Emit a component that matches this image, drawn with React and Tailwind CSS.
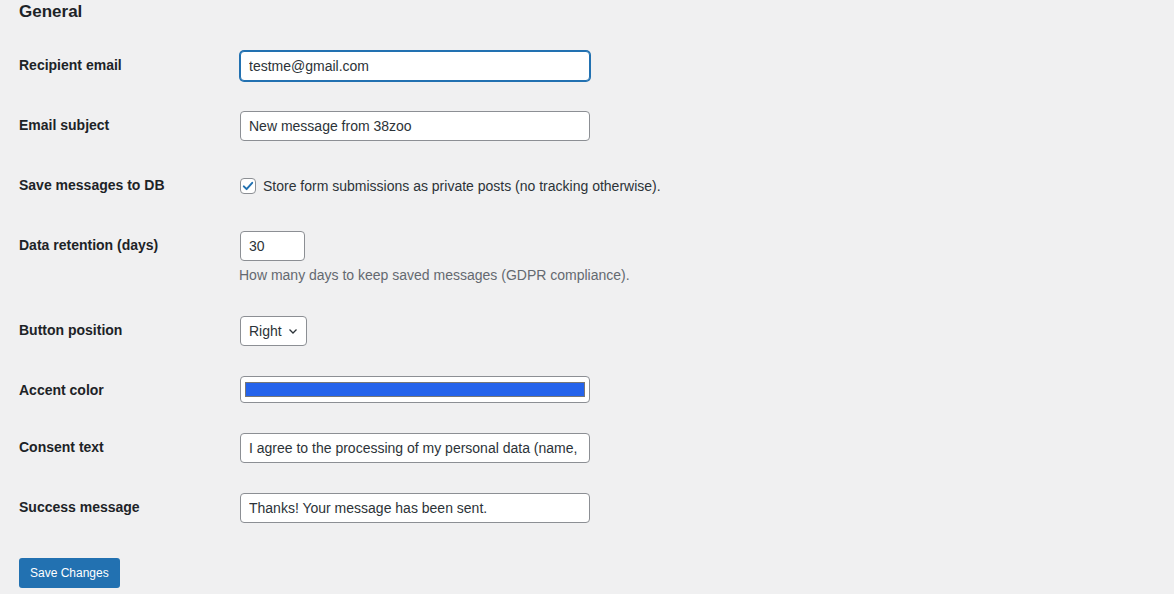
import React from 'react';

const font = { fontFamily: '"Liberation Sans", Arial, sans-serif' };

const Row = ({ label, children }) => (
  <div className="flex">
    <div className="w-[221px] shrink-0 pt-[20px] text-[14px] font-semibold leading-[18px] text-[#1d2327]">
      {label}
    </div>
    <div className="py-[15px]">{children}</div>
  </div>
);

const inputCls =
  'block h-[30px] rounded-[4px] border border-[#8c8f94] bg-white px-[8px] text-[14px] text-[#2c3338] outline-none';

export default function App() {
  return (
    <div className="min-h-[594px] w-full bg-[#f0f0f1] pl-[19px] pt-[2px]" style={font}>
      <h2 className="mb-[14px] text-[17px] font-semibold leading-[20px] text-[#1d2327]">General</h2>

      <Row label="Recipient email">
        <input
          className={`${inputCls} w-[350px] border-[#2271b1] shadow-[0_0_0_1px_#2271b1]`}
          defaultValue="testme@gmail.com"
          readOnly
        />
      </Row>

      <Row label="Email subject">
        <input className={`${inputCls} w-[350px]`} defaultValue="New message from 38zoo" readOnly />
      </Row>

      <Row label="Save messages to DB">
        <label className="flex h-[30px] items-center gap-[7px] text-[14px] text-[#2c3338]">
          <span className="flex h-[16px] w-[16px] items-center justify-center rounded-[4px] border border-[#8c8f94] bg-white">
            <svg width="14" height="14" viewBox="0 0 20 20">
              <path d="M4 10.5l4 4 8-9" fill="none" stroke="#2271b1" strokeWidth="2.8" strokeLinecap="round" strokeLinejoin="round" />
            </svg>
          </span>
          Store form submissions as private posts (no tracking otherwise).
        </label>
      </Row>

      <div className="flex">
        <div className="w-[221px] shrink-0 pt-[20px] text-[14px] font-semibold leading-[18px] text-[#1d2327]">
          Data retention (days)
        </div>
        <div className="pb-[15px] pt-[15px]">
          <input className={`${inputCls} h-[29px] w-[65px]`} defaultValue="30" readOnly />
          <p className="-ml-px mt-[4px] text-[14px] leading-[21px] text-[#646970]">
            How many days to keep saved messages (GDPR compliance).
          </p>
        </div>
      </div>

      <Row label="Button position">
        <div className="flex h-[30px] w-[67px] items-center justify-between rounded-[4px] border border-[#8c8f94] bg-white pl-[8px] pr-[8px] text-[14px] text-[#2c3338]">
          <span>Right</span>
          <svg width="10" height="10" viewBox="0 0 10 10">
            <path d="M1.5 3.5L5 7l3.5-3.5" fill="none" stroke="#2c3338" strokeWidth="1.3" />
          </svg>
        </div>
      </Row>

      <Row label="Accent color">
        <div className="flex h-[27px] w-[350px] items-center rounded-[4px] border border-[#8c8f94] bg-white px-[4px]">
          <div className="h-[15px] w-full border border-[#777] bg-[#2563eb]" />
        </div>
      </Row>

      <Row label="Consent text">
        <input
          className={`${inputCls} w-[350px]`}
          defaultValue="I agree to the processing of my personal data (name, email, message) for the purpose of answering my request."
          readOnly
        />
      </Row>

      <Row label="Success message">
        <input className={`${inputCls} w-[350px]`} defaultValue="Thanks! Your message has been sent." readOnly />
      </Row>

      <div className="pt-[20px]">
        <button className="h-[30px] rounded-[3px] bg-[#2271b1] px-[11px] text-[12px] text-white">
          Save Changes
        </button>
      </div>
    </div>
  );
}
